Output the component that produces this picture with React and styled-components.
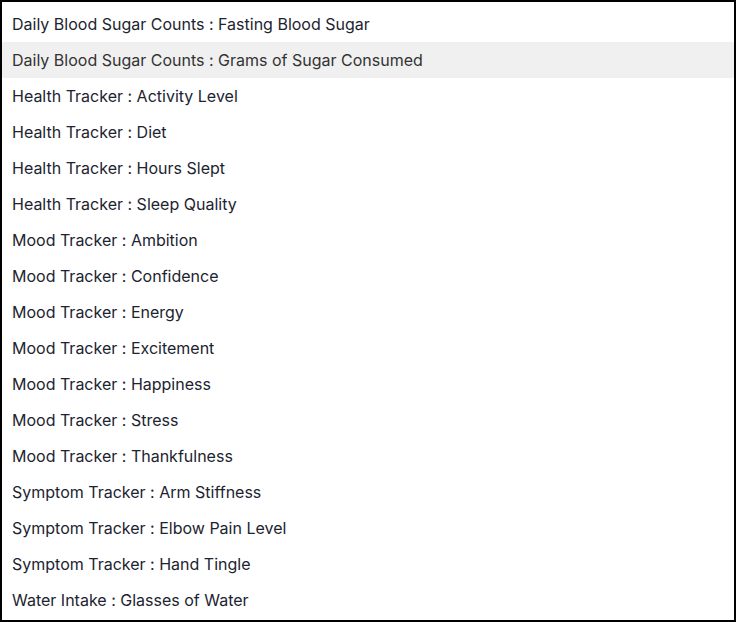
import styled, { createGlobalStyle } from 'styled-components'

const GlobalStyle = createGlobalStyle`
    html, body {
        margin: 0;
        padding: 0;
        background: #ffffff;
    }
    * {
        box-sizing: border-box;
    }
`;

const items = [
    'Daily Blood Sugar Counts : Fasting Blood Sugar',
    'Daily Blood Sugar Counts : Grams of Sugar Consumed',
    'Health Tracker : Activity Level',
    'Health Tracker : Diet',
    'Health Tracker : Hours Slept',
    'Health Tracker : Sleep Quality',
    'Mood Tracker : Ambition',
    'Mood Tracker : Confidence',
    'Mood Tracker : Energy',
    'Mood Tracker : Excitement',
    'Mood Tracker : Happiness',
    'Mood Tracker : Stress',
    'Mood Tracker : Thankfulness',
    'Symptom Tracker : Arm Stiffness',
    'Symptom Tracker : Elbow Pain Level',
    'Symptom Tracker : Hand Tingle',
    'Water Intake : Glasses of Water',
];

const App = () => {
    return (
        <>
            <GlobalStyle />
            <Menu>
                {items.map((label, i) => (
                    <Option key={label} $active={i === 1}>
                        {label}
                    </Option>
                ))}
            </Menu>
        </>
    );
};

const Menu = styled.ul`
    list-style: none;
    margin: 0;
    width: 736px;
    height: 622px;
    padding: 4px 0 2px;
    border: 2px solid #000;
    background: #fff;
    overflow: hidden;
    display: flex;
    flex-direction: column;
`;

const Option = styled.li`
    height: 36px;
    flex: 0 0 36px;
    display: flex;
    align-items: center;
    padding: 0 10px;
    font-family: Inter, "Noto Sans", sans-serif;
    font-size: 16px;
    font-feature-settings: "calt" 0;
    color: ${(p) => (p.$active ? '#333333' : '#1c2430')};
    background: ${(p) => (p.$active ? '#f0f0f0' : 'transparent')};
    white-space: nowrap;
    cursor: pointer;
`;

export default App;
